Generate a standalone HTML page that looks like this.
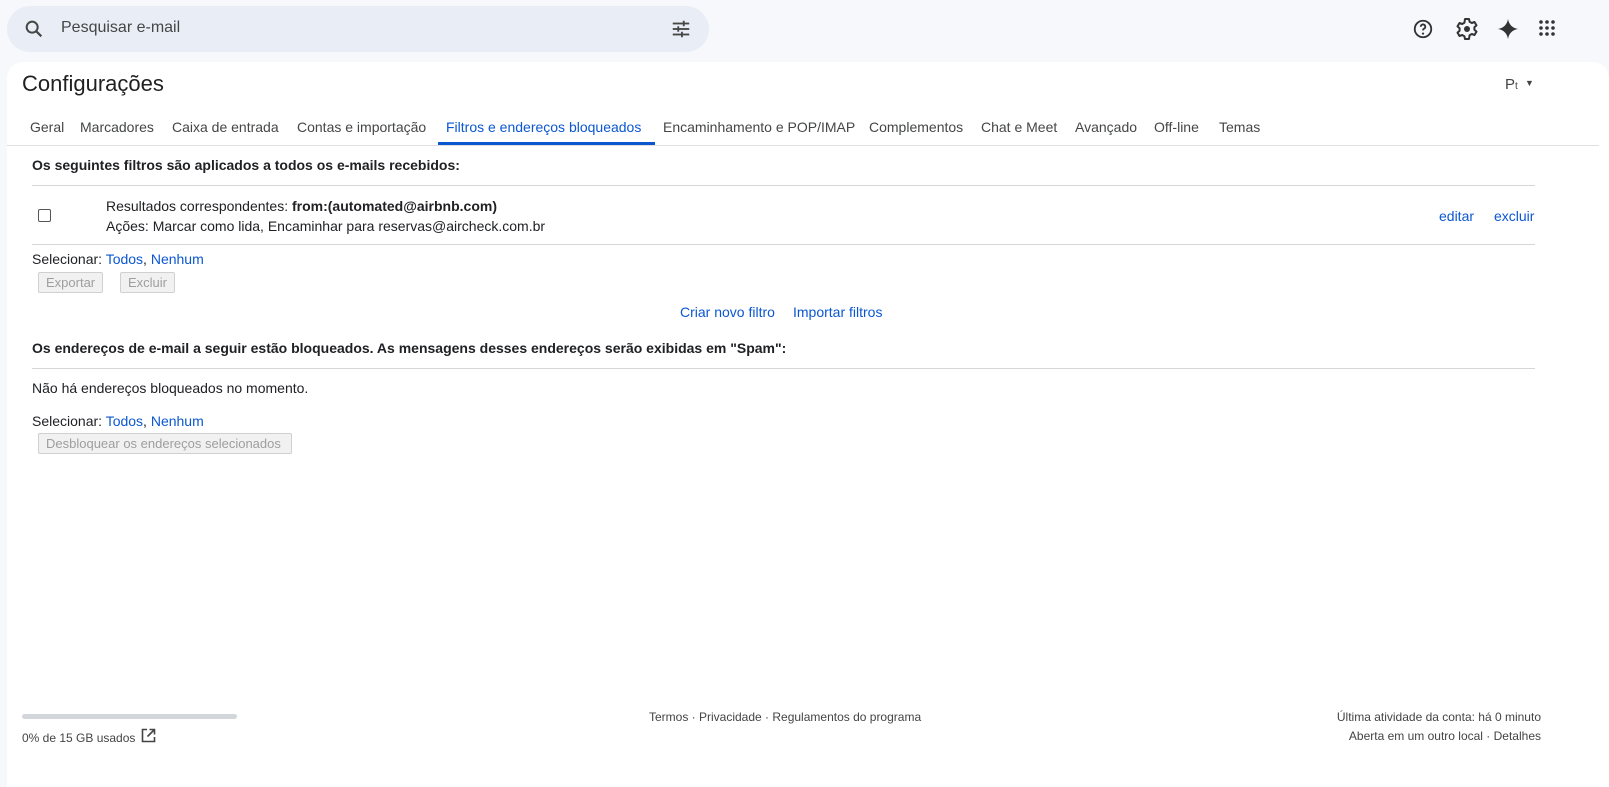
<!DOCTYPE html>
<html><head><meta charset="utf-8"><style>
*{margin:0;padding:0;box-sizing:border-box}
body{width:1609px;height:787px;background:#f6f8fc;font-family:"Liberation Sans",Arial,sans-serif;color:#202124;position:relative;overflow:hidden;font-size:14px}
.abs{position:absolute}
.search{left:7px;top:6px;width:702px;height:46px;background:#e9eef6;border-radius:24px}
.card{left:7px;top:62px;width:1602px;height:725px;background:#fff;border-radius:16px 16px 0 0}
a{color:#0b57d0;text-decoration:none}
.tab{top:119px;font-size:14px;color:#444746}
.line{background:#e0e0e0;height:1px}
.btn{border:1px solid #d0d0d0;background:#f1f1f1;color:#9e9e9e;font-size:13px;height:21px;line-height:19px;padding:0 7px;border-radius:2px}
</style></head><body>
<div class="abs search"></div>
<svg class="abs" style="left:23px;top:18px" width="22" height="22" viewBox="0 0 24 24"><circle cx="10" cy="10" r="6" fill="none" stroke="#444746" stroke-width="2.2"/><path d="M14.5 14.5L20 20" stroke="#444746" stroke-width="2.4"/></svg>
<div class="abs" style="left:61px;top:19px;font-size:16px;color:#444746">Pesquisar e-mail</div>
<svg class="abs" style="left:670px;top:18px" width="22" height="22" viewBox="0 0 24 24" fill="#444746"><rect x="3" y="5" width="18" height="2"/><rect x="3" y="11" width="18" height="2"/><rect x="3" y="17" width="18" height="2"/><rect x="14" y="3" width="2" height="6" /><rect x="8" y="9" width="2" height="6"/><rect x="12" y="15" width="2" height="6"/></svg>
<svg class="abs" style="left:1412px;top:18px" width="22" height="22" viewBox="0 0 24 24"><circle cx="12" cy="12" r="9" fill="none" stroke="#333" stroke-width="2"/><path d="M9.5 9.5a2.5 2.5 0 1 1 3.5 2.3c-.8.4-1 .9-1 1.7" fill="none" stroke="#333" stroke-width="2"/><circle cx="12" cy="17" r="1.2" fill="#333"/></svg>
<svg class="abs" style="left:1455px;top:17px" width="24" height="24" viewBox="0 0 24 24"><path d="M10 2h4l.6 2.8 2.2 1.2 2.7-1 2 3.4-2.1 1.9v2.4l2.1 1.9-2 3.4-2.7-1-2.2 1.2L14 22h-4l-.6-2.8-2.2-1.2-2.7 1-2-3.4 2.1-1.9V11.3L2.5 9.4l2-3.4 2.7 1 2.2-1.2z" fill="none" stroke="#333" stroke-width="2" stroke-linejoin="round"/><circle cx="12" cy="12" r="3" fill="#333"/></svg>
<svg class="abs" style="left:1497px;top:18px" width="22" height="22" viewBox="0 0 24 24"><path d="M12 1C12.8 7 17 11.2 23 12 17 12.8 12.8 17 12 23 11.2 17 7 12.8 1 12 7 11.2 11.2 7 12 1z" fill="#333"/></svg>
<svg class="abs" style="left:1539px;top:20px" width="16" height="16" viewBox="0 0 16 16" fill="#333"><circle cx="2" cy="2" r="1.8"/><circle cx="8" cy="2" r="1.8"/><circle cx="14" cy="2" r="1.8"/><circle cx="2" cy="8" r="1.8"/><circle cx="8" cy="8" r="1.8"/><circle cx="14" cy="8" r="1.8"/><circle cx="2" cy="14" r="1.8"/><circle cx="8" cy="14" r="1.8"/><circle cx="14" cy="14" r="1.8"/></svg>
<div class="abs card"></div>
<div class="abs" style="left:22px;top:71px;font-size:22px;color:#1f1f1f">Configurações</div>
<div class="abs" style="left:1505px;top:76px;font-size:15px;color:#444">P<span style="font-size:10px">t</span> <span style="font-size:9px;position:relative;top:-3px;left:3px">▼</span></div>
<div class="abs tab" style="left:30px">Geral</div>
<div class="abs tab" style="left:80px">Marcadores</div>
<div class="abs tab" style="left:172px">Caixa de entrada</div>
<div class="abs tab" style="left:297px">Contas e importação</div>
<div class="abs tab" style="left:446px;color:#0b57d0">Filtros e endereços bloqueados</div>
<div class="abs" style="left:438px;top:142px;width:217px;height:3px;background:#0b57d0"></div>
<div class="abs tab" style="left:663px">Encaminhamento e POP/IMAP</div>
<div class="abs tab" style="left:869px">Complementos</div>
<div class="abs tab" style="left:981px">Chat e Meet</div>
<div class="abs tab" style="left:1075px">Avançado</div>
<div class="abs tab" style="left:1154px">Off-line</div>
<div class="abs tab" style="left:1219px">Temas</div>
<div class="abs line" style="left:7px;top:145px;width:1592px"></div>
<div class="abs" style="left:32px;top:157px;font-weight:bold;font-size:14px">Os seguintes filtros são aplicados a todos os e-mails recebidos:</div>
<div class="abs line" style="left:32px;top:185px;width:1503px;background:#d6d6d6"></div>
<div class="abs" style="left:38px;top:209px;width:13px;height:13px;border:1px solid #555;border-radius:2px"></div>
<div class="abs" style="left:106px;top:198px">Resultados correspondentes: <b>from:(automated@airbnb.com)</b></div>
<div class="abs" style="left:106px;top:218px">Ações: Marcar como lida, Encaminhar para reservas@aircheck.com.br</div>
<div class="abs" style="left:1439px;top:208px"><a>editar</a></div>
<div class="abs" style="left:1494px;top:208px"><a>excluir</a></div>
<div class="abs line" style="left:32px;top:244px;width:1503px;background:#d6d6d6"></div>
<div class="abs" style="left:32px;top:251px">Selecionar: <a>Todos</a>, <a>Nenhum</a></div>
<div class="abs btn" style="left:38px;top:272px">Exportar</div>
<div class="abs btn" style="left:120px;top:272px">Excluir</div>
<div class="abs" style="left:680px;top:304px"><a>Criar novo filtro</a></div>
<div class="abs" style="left:793px;top:304px"><a>Importar filtros</a></div>
<div class="abs" style="left:32px;top:340px;font-weight:bold">Os endereços de e-mail a seguir estão bloqueados. As mensagens desses endereços serão exibidas em "Spam":</div>
<div class="abs line" style="left:32px;top:368px;width:1503px;background:#d6d6d6"></div>
<div class="abs" style="left:32px;top:380px">Não há endereços bloqueados no momento.</div>
<div class="abs" style="left:32px;top:413px">Selecionar: <a>Todos</a>, <a>Nenhum</a></div>
<div class="abs btn" style="left:38px;top:433px;width:254px">Desbloquear os endereços selecionados</div>
<div class="abs" style="left:22px;top:714px;width:215px;height:5px;border-radius:3px;background:#d3d6da"></div>
<div class="abs" style="left:22px;top:731px;font-size:12px;color:#444">0% de 15 GB usados</div>
<svg class="abs" style="left:141px;top:728px" width="15" height="15" viewBox="0 0 15 15"><path d="M6 1.5H1.5v12h12V9M8.5 1.5h5v5M13.5 1.5L6.5 8.5" fill="none" stroke="#444" stroke-width="1.6"/></svg>
<div class="abs" style="left:649px;top:710px;font-size:12px;color:#444">Termos · Privacidade · Regulamentos do programa</div>
<div class="abs" style="right:68px;top:710px;font-size:12px;color:#444;text-align:right">Última atividade da conta: há 0 minuto</div>
<div class="abs" style="right:68px;top:729px;font-size:12px;color:#444;text-align:right">Aberta em um outro local · Detalhes</div>
</body></html>
